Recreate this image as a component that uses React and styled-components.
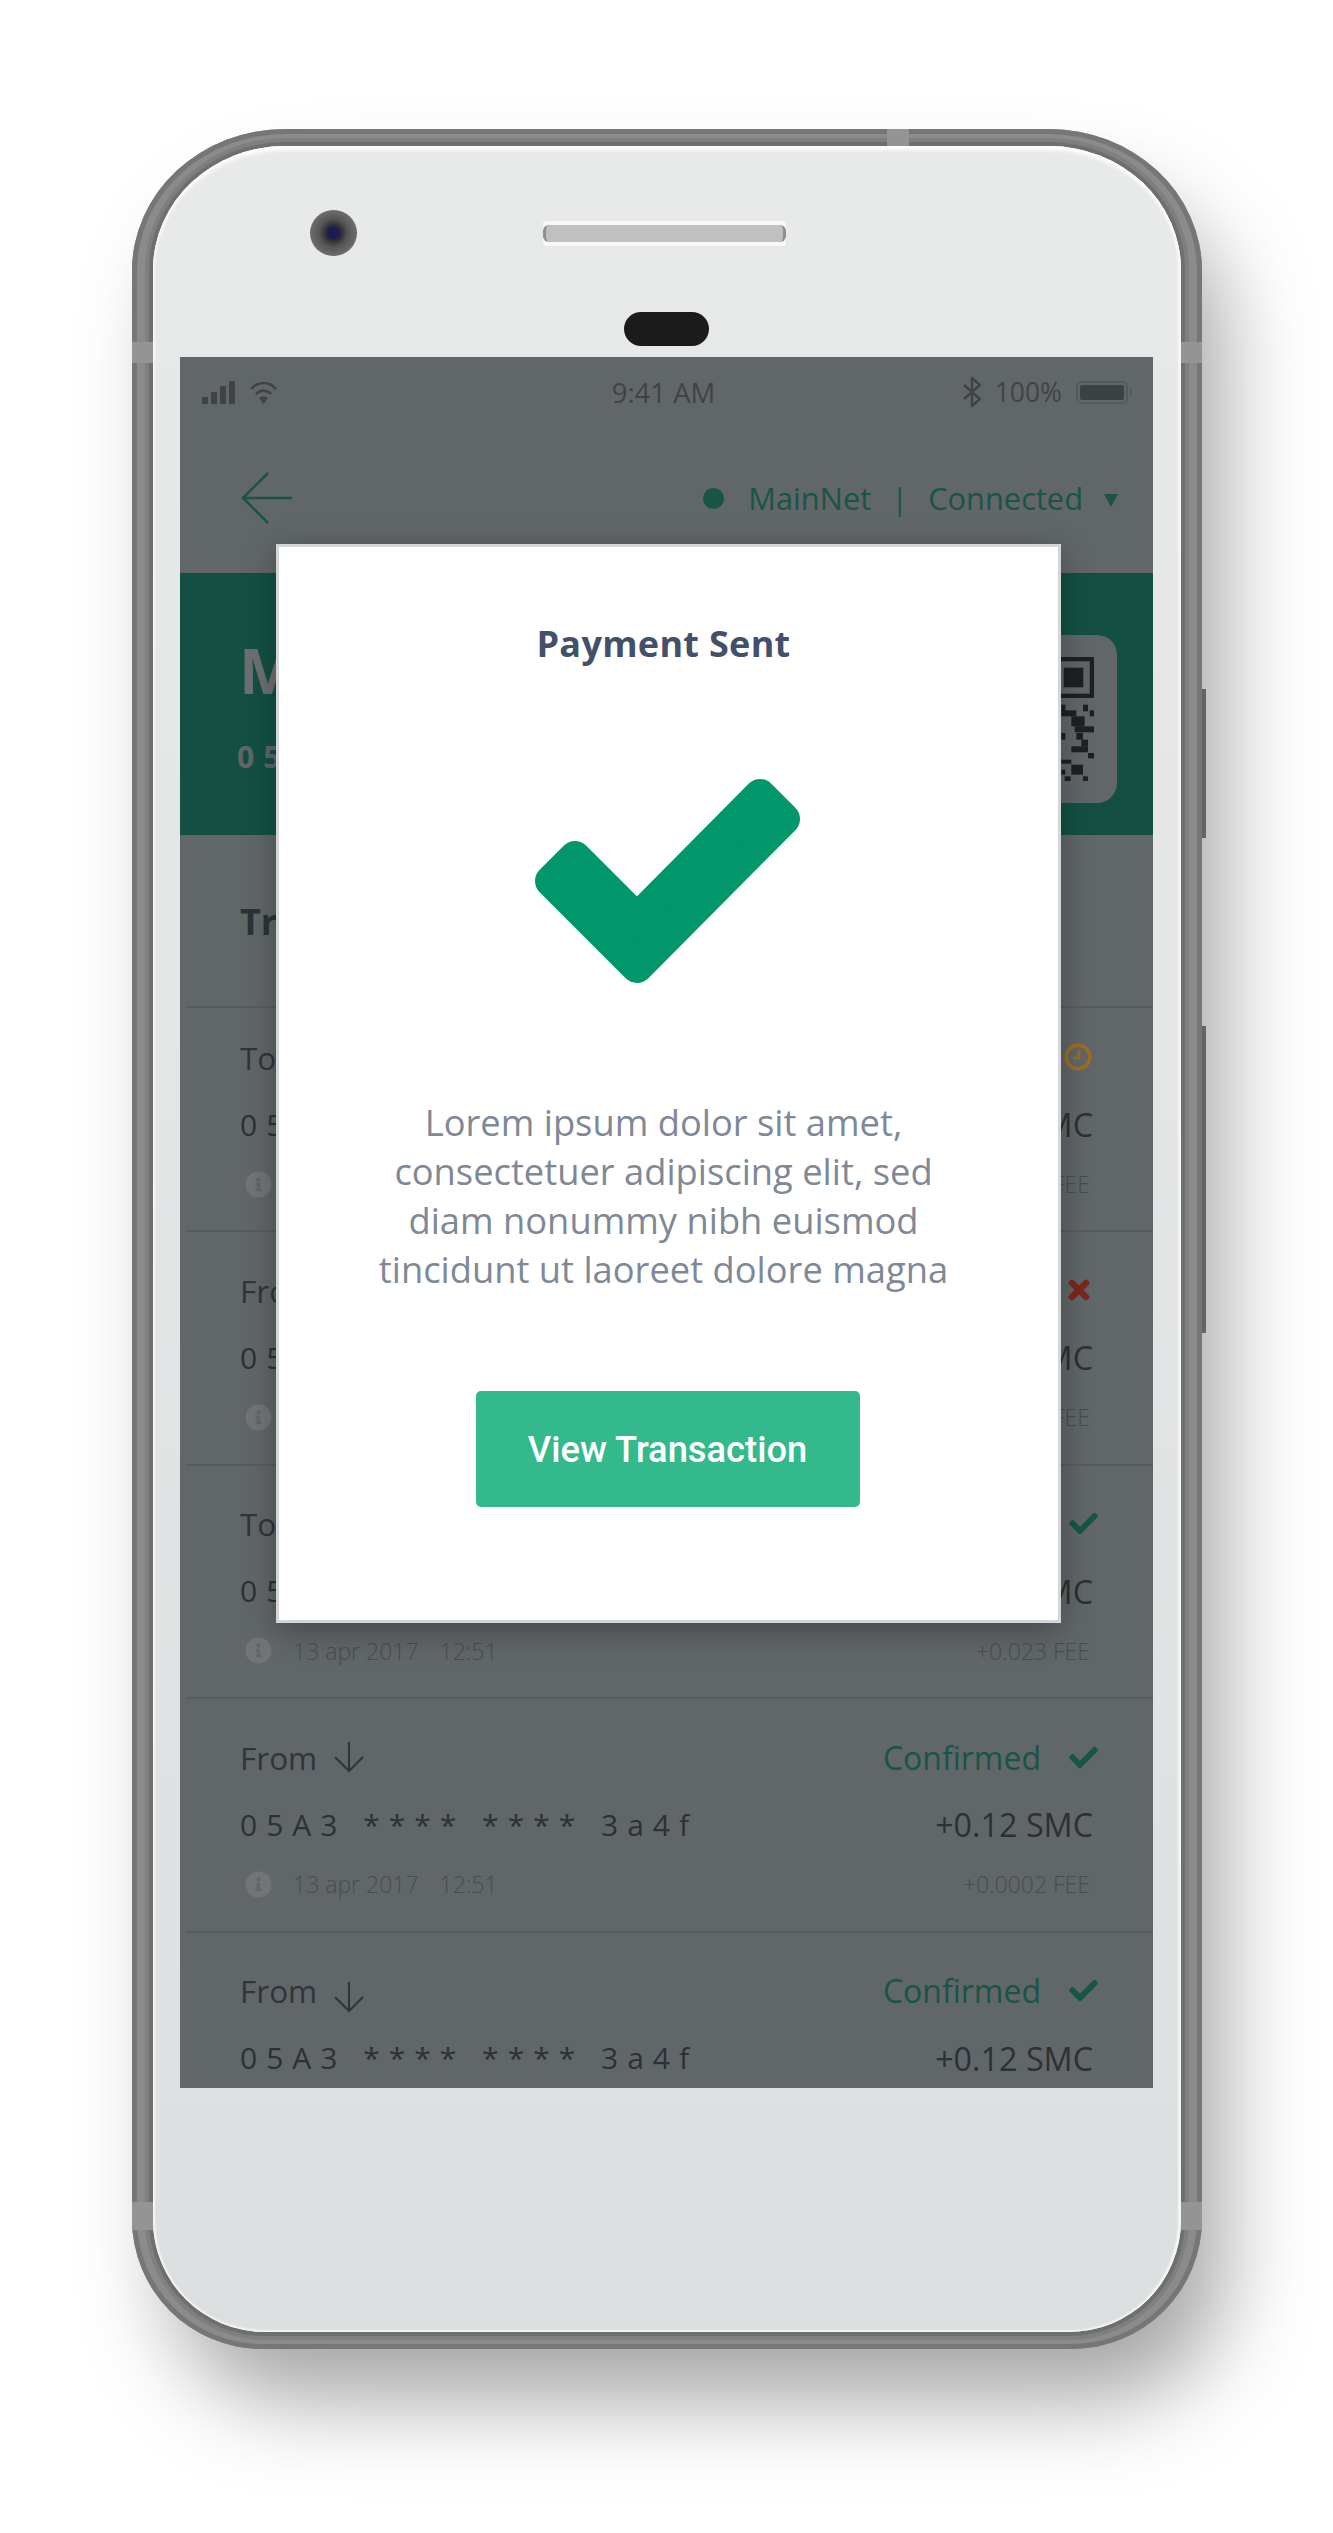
import React from "react";
import styled, { createGlobalStyle } from "styled-components";
import { FaCheck, FaInfoCircle } from "react-icons/fa";

const Global = createGlobalStyle`
  html, body { margin: 0; padding: 0; background: #fff; }
  body { font-family: "Open Sans", "Liberation Sans", sans-serif; }
  * { box-sizing: border-box; }
`;

const Page = styled.div`
  width: 1333px;
  height: 2533px;
  overflow: hidden;
  padding: 129px 0 0 132px;
  background: #fff;
`;

const Frame = styled.div`
  position: relative;
  width: 1070px;
  height: 2220px;
  padding: 17px 21px;
  background: #8b8b8b;
  border-radius: 153px 153px 130px 130px / 142px 142px 130px 130px;
  box-shadow: inset 0 0 0 5px #767676, 30px 60px 90px -10px rgba(0, 0, 0, 0.36);
`;

const SideButton = styled.div`
  position: absolute;
  right: -4px;
  top: ${(p) => p.$top}px;
  width: 4px;
  height: ${(p) => p.$height}px;
  background: #636363;
`;

const Band = styled.div`
  position: absolute;
  background: #949494;
  ${(p) => p.$side === "top" && `top: 0; left: ${p.$at}px; width: 22px; height: 17px;`}
  ${(p) => p.$side === "left" && `left: 0; top: ${p.$at}px; width: 21px; height: ${p.$len}px;`}
  ${(p) => p.$side === "right" && `right: 0; top: ${p.$at}px; width: 21px; height: ${p.$len}px;`}
`;

const Body = styled.div`
  display: flex;
  flex-direction: column;
  height: 100%;
  padding: 0 28px 0 27px;
  background: linear-gradient(180deg, #e8e9e9 0%, #e4e6e6 40%, #dbdfdf 100%);
  border-radius: 132px 132px 112px 112px / 124px 124px 112px 112px;
  box-shadow: 0 0 0 4px #6f6f6f, 0 0 0 8px #7f7f7f, inset 0 6px 4px -2px #fff,
    inset 3px 0 2px -1px #f6f6f6, inset -4px 0 2px -1px #f6f6f6, inset 0 -3px 2px -1px #f4f4f4;
`;

const TopRow = styled.div`
  display: flex;
  align-items: center;
  padding-top: 64px;
  height: 110px;
`;

const Camera = styled.div`
  width: 47px;
  height: 46px;
  margin-left: 130px;
  border-radius: 50%;
  background: radial-gradient(circle, #1d1b52 0 5px, #2f2f35 8px, #555557 14px, #6a6a6a 22px);
`;

const Speaker = styled.div`
  width: 243px;
  height: 25px;
  margin-left: 186px;
  padding: 4px 0;
  background: #f7f7f7;
  border-radius: 3px;
  &::before {
    content: "";
    display: block;
    height: 17px;
    border-radius: 6px;
    background: #bfc0c0;
    border: solid #8e8e8e;
    border-width: 0 3px;
  }
`;

const Earpiece = styled.div`
  align-self: center;
  width: 85px;
  height: 34px;
  margin-top: 56px;
  border-radius: 17px;
  background: #1b1b1b;
`;

const Screen = styled.div`
  position: relative;
  flex: none;
  width: 973px;
  height: 1731px;
  margin-top: 11px;
  overflow: hidden;
  background: #8c9397;
`;

const Scrim = styled.div`
  position: absolute;
  inset: 0;
  background: rgba(0, 0, 0, 0.3);
`;

const StatusBar = styled.div`
  display: grid;
  grid-template-columns: 1fr auto 1fr;
  align-items: center;
  height: 70px;
  padding: 0 19px 0 22px;
  color: #5b6165;
`;

const StatusLeft = styled.div`
  display: flex;
  align-items: center;
  gap: 14px;
`;

const StatusTime = styled.span`
  font-size: 27.5px;
  margin-right: 9px;
`;

const StatusRight = styled.div`
  display: flex;
  align-items: center;
  justify-content: flex-end;
  gap: 14px;
  font-size: 26.5px;
`;

const Nav = styled.div`
  display: flex;
  align-items: center;
  justify-content: space-between;
  height: 146px;
  padding: 0 35px 4px 61px;
  color: #247a64;
  font-size: 30.8px;
`;

const Network = styled.div`
  display: flex;
  align-items: center;
`;

const Dot = styled.span`
  width: 21px;
  height: 21px;
  border-radius: 50%;
  background: #247a64;
  margin-right: 24px;
`;

const Pipe = styled.span`
  margin: 0 20px;
`;

const Caret = styled.svg`
  margin-left: 21px;
  margin-top: 4px;
`;

const Header = styled.div`
  display: flex;
  justify-content: space-between;
  align-items: center;
  height: 262px;
  padding: 0 36px 0 57px;
  background: #1c7360;
`;

const WalletName = styled.div`
  font-size: 62px;
  line-height: 76px;
  font-weight: 700;
  color: #9da1a4;
  padding-left: 2px;
`;

const WalletAddress = styled.div`
  font-size: 30px;
  line-height: 40px;
  font-weight: 700;
  letter-spacing: 9px;
  color: #8c9397;
  margin-top: 29px;
  white-space: nowrap;
`;

const QrCard = styled.div`
  display: flex;
  align-items: center;
  justify-content: center;
  width: 170px;
  height: 168px;
  margin-top: 30px;
  border-radius: 20px;
  background: #8c9397;
`;

const SectionTitle = styled.div`
  display: flex;
  align-items: center;
  height: 171px;
  padding: 2px 60px 0;
  font-size: 36px;
  font-weight: 700;
  color: #3f4950;
`;

const Row = styled.div`
  height: ${(p) => (p.$first ? 224 : 233.5)}px;
  margin-left: 6px;
  padding: ${(p) => (p.$first ? 29 : 38)}px 60px 0 54px;
  border-top: 2px solid #7e8488;
`;

const Line = styled.div`
  display: flex;
  align-items: center;
  justify-content: space-between;
  height: 40px;
  margin-top: ${(p) => p.$gap || 0}px;
  white-space: nowrap;
`;

const Direction = styled.div`
  display: flex;
  align-items: center;
  gap: 17px;
  font-size: 31.5px;
  color: #454d53;
`;

const Arrow = styled.svg`
  margin-top: ${(p) => (p.$drop ? 12 : 0)}px;
`;

const State = styled.div`
  display: flex;
  align-items: center;
  font-size: 32px;
  color: #247a64;
`;

const StateIcon = styled.span`
  display: flex;
  margin-left: ${(p) => p.$ml}px;
  margin-right: ${(p) => p.$mr}px;
  color: ${(p) => p.$color};
`;

const Address = styled.div`
  font-size: 30px;
  font-weight: 500;
  letter-spacing: 9px;
  color: #3f474d;
`;

const Amount = styled.div`
  font-size: 32.3px;
  color: #3f474d;
`;

const Meta = styled.div`
  display: flex;
  align-items: center;
  margin-right: ${(p) => p.$mr || 0}px;
  font-size: 23px;
  font-weight: 300;
  color: #676f74;
`;

const InfoIcon = styled.span`
  display: flex;
  margin: 0 21px 0 5px;
  color: #a2a8ac;
`;

const Time = styled.span`
  margin-left: 21px;
`;

const Modal = styled.div`
  position: absolute;
  left: 96px;
  top: 187px;
  width: 785px;
  height: 1079px;
  display: flex;
  flex-direction: column;
  align-items: center;
  padding-top: 73px;
  background: #fff;
  border: 3px solid #d4d5d6;
  box-shadow: 0 8px 30px rgba(0, 0, 0, 0.3);
`;

const ModalTitle = styled.div`
  margin-right: 10px;
  font-size: 36px;
  line-height: 48px;
  font-weight: 700;
  letter-spacing: 0.3px;
  color: #42506a;
`;

const BigCheck = styled.svg`
  display: block;
  margin: 111px 2px 0 0;
`;

const ModalText = styled.p`
  margin: 115px 10px 0 0;
  font-size: 36.3px;
  line-height: 49px;
  text-align: center;
  color: #7e8896;
`;

const Action = styled.button`
  width: 384px;
  height: 116px;
  margin: 97px 2px 0 0;
  border: 0;
  border-radius: 5px;
  background: #33b98b;
  color: #fff;
  font-family: Roboto, "Liberation Sans", sans-serif;
  font-size: 36.3px;
  font-weight: 500;
`;

const Signal = () => (
  <svg width="34" height="23" viewBox="0 0 34 23" fill="currentColor">
    <rect x="0" y="16" width="6" height="7" rx="1" />
    <rect x="9" y="11" width="6" height="12" rx="1" />
    <rect x="18" y="5" width="6" height="18" rx="1" />
    <rect x="27" y="0" width="6" height="23" rx="1" />
  </svg>
);

const Wifi = () => (
  <svg width="27" height="23" viewBox="0 0 27 23" fill="none" stroke="currentColor" strokeWidth="2.6">
    <path d="M1 8 C8 0 19 0 26 8" />
    <path d="M6 13 C10 8.5 17 8.5 21 13" />
    <path d="M13.5 23 L9 17 C11.5 15 15.5 15 18 17 Z" fill="currentColor" stroke="none" />
  </svg>
);

const Bluetooth = () => (
  <svg width="18" height="30" viewBox="0 0 18 30" fill="none" stroke="currentColor" strokeWidth="2.4">
    <path d="M1 8 L17 22 L9 29 V1 L17 8 L1 22" />
  </svg>
);

const Battery = () => (
  <svg width="58" height="23" viewBox="0 0 58 23">
    <rect x="1" y="1" width="50" height="21" rx="4" fill="none" stroke="#7a8084" strokeWidth="2" />
    <rect x="4" y="4" width="44" height="15" rx="2" fill="#565d62" />
    <rect x="54" y="8" width="2" height="7" fill="#7a8084" />
  </svg>
);

const BackArrow = () => (
  <svg width="52" height="52" viewBox="0 0 52 52" fill="none" stroke="#247a64" strokeWidth="2.6">
    <path d="M51 26 H2 M27 1 L2 26 L27 51" />
  </svg>
);

const DownArrow = ({ drop }) => (
  <Arrow $drop={drop} width="30" height="30" viewBox="0 0 30 30" fill="none" stroke="#454d53" strokeWidth="2.2">
    <path d="M15 0 V28 M1 15 L15 29 L29 15" />
  </Arrow>
);

const Clock = () => (
  <svg width="28" height="28" viewBox="0 0 28 28" fill="none" stroke="#e0a030" strokeWidth="3.6">
    <circle cx="14" cy="14" r="11.8" />
    <path d="M15 7 V15 H9" strokeWidth="2.6" />
  </svg>
);

const Cross = () => (
  <svg width="22" height="22" viewBox="0 0 22 22" fill="none" stroke="#b03a2c" strokeWidth="6.5" strokeLinecap="round">
    <path d="M4 4 L18 18 M18 4 L4 18" />
  </svg>
);

const QR_RECTS = [
  [0, 0, 123, 123], [249, 0, 123, 123], [0, 249, 123, 123],
];
const QR_BITS = [
  [274, 143, 12, 20], [339, 143, 15, 20], [274, 160, 45, 18], [359, 160, 13, 18],
  [304, 178, 40, 30], [314, 208, 58, 18], [274, 228, 12, 20], [319, 228, 20, 20],
  [334, 248, 20, 20], [304, 268, 50, 18], [354, 288, 18, 16], [274, 308, 30, 12],
  [304, 323, 35, 30], [274, 338, 12, 15], [284, 358, 18, 15], [339, 358, 15, 15],
];

const QrCode = () => (
  <svg width="124" height="124" viewBox="0 0 372 372">
    {QR_RECTS.map(([x, y, w, h]) => (
      <g key={`${x}-${y}`}>
        <rect x={x} y={y} width={w} height={h} fill="#2a3034" />
        <rect x={x + 13} y={y + 13} width={w - 26} height={h - 26} fill="#8c9397" />
        <rect x={x + 32} y={y + 32} width={w - 64} height={h - 64} fill="#2a3034" />
      </g>
    ))}
    {QR_BITS.map(([x, y, w, h]) => (
      <rect key={`${x}-${y}`} x={x} y={y} width={w} height={h} fill="#2a3034" />
    ))}
  </svg>
);

const TX = [
  { dir: "To", state: "Pending", icon: "clock", date: "13 apr 2017", fee: "+0.023 FEE", amount: "-0.12 SMC", first: true },
  { dir: "From", state: "Failed", icon: "x", date: "13 apr 2017", fee: "+0.023 FEE", amount: "+0.12 SMC" },
  { dir: "To", state: "Confirmed", icon: "check", date: "13 apr 2017", fee: "+0.023 FEE", amount: "-0.12 SMC" },
  { dir: "From", state: "Confirmed", icon: "check", date: "13 apr 2017", fee: "+0.0002 FEE", amount: "+0.12 SMC" },
  { dir: "From", state: "Confirmed", icon: "check", date: "13 apr 2017", fee: "+0.0002 FEE", amount: "+0.12 SMC", drop: true },
];

const StatusGlyph = ({ icon }) => {
  if (icon === "clock")
    return (
      <StateIcon $ml={24} $mr={1}>
        <Clock />
      </StateIcon>
    );
  if (icon === "x")
    return (
      <StateIcon $ml={28} $mr={3}>
        <Cross />
      </StateIcon>
    );
  return (
    <StateIcon $ml={28} $mr={-5} $color="#1f7c66">
      <FaCheck size={29} />
    </StateIcon>
  );
};

const TxRow = ({ tx }) => (
  <Row $first={tx.first}>
    <Line>
      <Direction>
        {tx.dir}
        <DownArrow drop={tx.drop} />
      </Direction>
      <State>
        {tx.state}
        <StatusGlyph icon={tx.icon} />
      </State>
    </Line>
    <Line $gap={27}>
      <Address>05A3 **** **** 3a4f</Address>
      <Amount>{tx.amount}</Amount>
    </Line>
    <Line $gap={20}>
      <Meta>
        <InfoIcon>
          <FaInfoCircle size={27} />
        </InfoIcon>
        {tx.date}
        <Time>12:51</Time>
      </Meta>
      <Meta $mr={3}>{tx.fee}</Meta>
    </Line>
  </Row>
);

export default function App() {
  return (
    <Page>
      <Global />
      <Frame>
        <SideButton $top={560} $height={149} />
        <SideButton $top={897} $height={307} />
        <Band $side="top" $at={755} />
        <Band $side="left" $at={213} $len={21} />
        <Band $side="right" $at={213} $len={21} />
        <Band $side="left" $at={2073} $len={28} />
        <Band $side="right" $at={2073} $len={28} />
        <Body>
          <TopRow>
            <Camera />
            <Speaker />
          </TopRow>
          <Earpiece />
          <Screen>
            <StatusBar>
              <StatusLeft>
                <Signal />
                <Wifi />
              </StatusLeft>
              <StatusTime>9:41 AM</StatusTime>
              <StatusRight>
                <Bluetooth />
                <span>100%</span>
                <Battery />
              </StatusRight>
            </StatusBar>
            <Nav>
              <BackArrow />
              <Network>
                <Dot />
                MainNet
                <Pipe>|</Pipe>
                Connected
                <Caret width="14" height="13" viewBox="0 0 14 13" fill="#247a64">
                  <path d="M0 0 H14 L7 13 Z" />
                </Caret>
              </Network>
            </Nav>
            <Header>
              <div>
                <WalletName>My Wallet</WalletName>
                <WalletAddress>05A3 **** **** 3a4f</WalletAddress>
              </div>
              <QrCard>
                <QrCode />
              </QrCard>
            </Header>
            <SectionTitle>Transactions</SectionTitle>
            {TX.map((tx, i) => (
              <TxRow key={i} tx={tx} />
            ))}
            <Scrim />
            <Modal>
              <ModalTitle>Payment Sent</ModalTitle>
              <BigCheck width="265" height="204" viewBox="0 0 265 204">
                <polygon
                  points="16,102 40,78 102,140 225,16 249,40 102,188"
                  fill="#02976b"
                  stroke="#02976b"
                  strokeWidth="32"
                  strokeLinejoin="round"
                />
              </BigCheck>
              <ModalText>
                Lorem ipsum dolor sit amet,
                <br />
                consectetuer adipiscing elit, sed
                <br />
                diam nonummy nibh euismod
                <br />
                tincidunt ut laoreet dolore magna
              </ModalText>
              <Action>View Transaction</Action>
            </Modal>
          </Screen>
        </Body>
      </Frame>
    </Page>
  );
}
